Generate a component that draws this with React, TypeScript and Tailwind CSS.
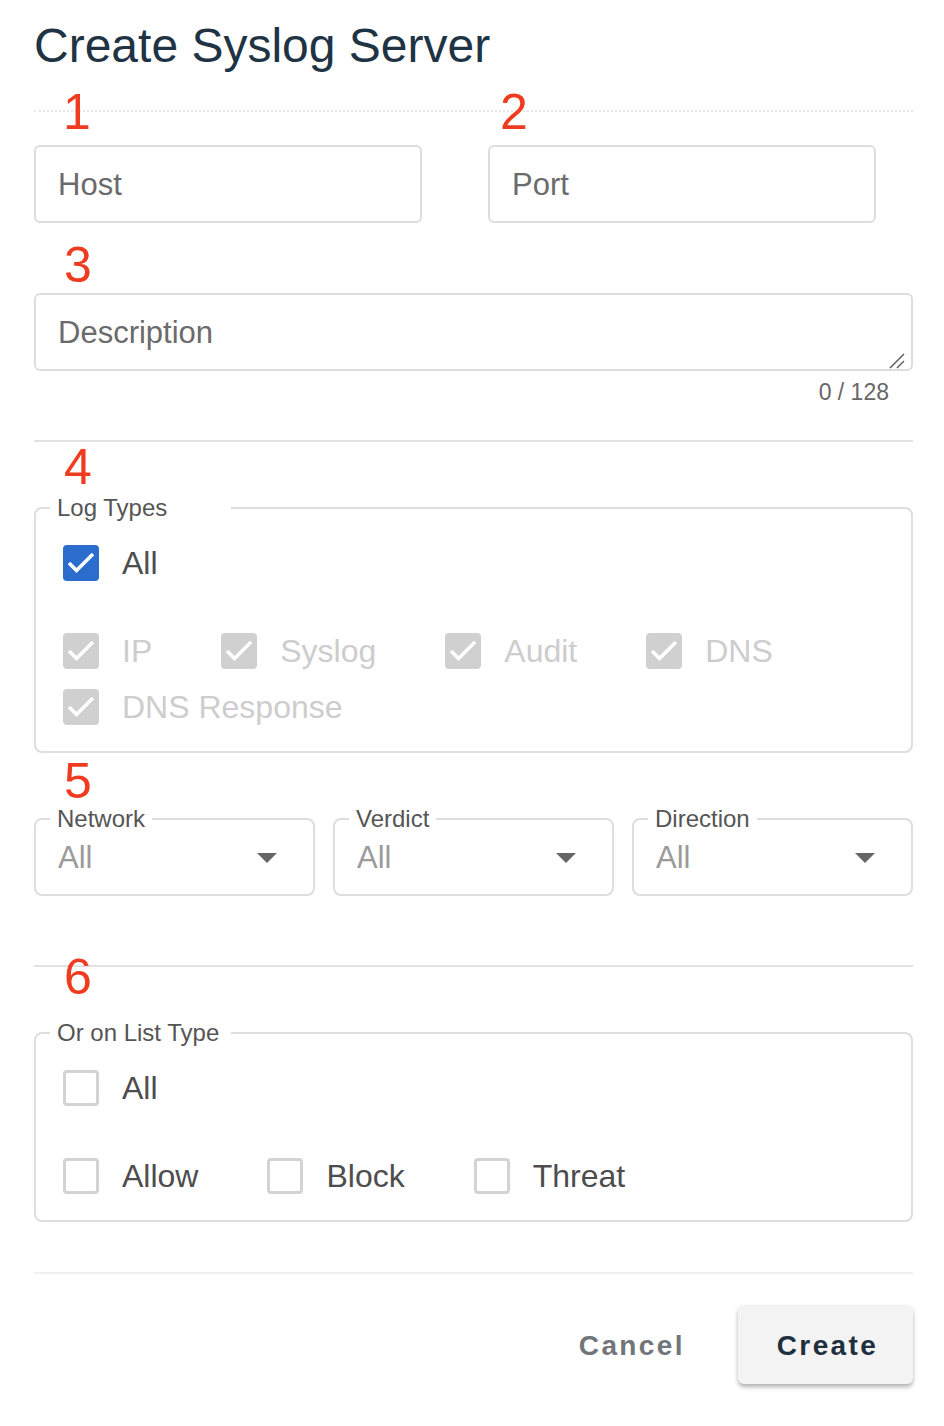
import React from "react";

const logTypes = ["IP", "Syslog", "Audit", "DNS", "DNS Response"];
const listTypes = ["Allow", "Block", "Threat"];
const selects = ["Network", "Verdict", "Direction"];

function Step({ n, className = "" }: { n: string; className?: string }) {
  return (
    <div className={`h-[50px] text-[50px] leading-[50px] text-[#ef3b1f] ${className}`}>{n}</div>
  );
}

function Check({ state }: { state: "on" | "off" | "disabled" }) {
  if (state === "off") {
    return <span className="block h-[36px] w-[36px] shrink-0 rounded-[4px] border-[3px] border-[#d3d3d3]" />;
  }
  return (
    <span
      className={`flex h-[36px] w-[36px] shrink-0 items-center justify-center rounded-[4px] ${
        state === "on" ? "bg-[#2a6dcc]" : "bg-[#d0d0d0]"
      }`}
    >
      <svg width="36" height="36" viewBox="0 0 36 36">
        <polyline points="6,18 13.5,25.5 30,9" fill="none" stroke="#fff" strokeWidth="3.6" />
      </svg>
    </span>
  );
}

function CheckItem({ label, state }: { label: string; state: "on" | "off" | "disabled" }) {
  return (
    <label className="flex h-[56px] items-center gap-[23px]">
      <Check state={state} />
      <span
        className={`text-[32px] leading-[36px] whitespace-nowrap ${
          state === "disabled" ? "text-[#cdcdcd]" : "text-[#4d4d4d]"
        }`}
      >
        {label}
      </span>
    </label>
  );
}

function Group({ title, children }: { title: string; children: React.ReactNode }) {
  return (
    <fieldset className="rounded-[8px] border-2 border-[#dedede] pt-[15px] pb-[16px] pl-[27px]">
      <legend className="ml-[-13px] w-[181px] pl-[7px] text-left text-[24px] leading-[24px] text-[#555]">
        {title}
      </legend>
      {children}
    </fieldset>
  );
}

export default function App() {
  return (
    <div className="min-h-[1426px] w-[944px] bg-white font-['Liberation_Sans',Arial,sans-serif]">
      <div className="ml-[34px] w-[879px] pt-[22px]">
        {/* Title */}
        <h1 className="h-[48px] text-[48px] leading-[48px] text-[#1e3344]">Create Syslog Server</h1>

        <div className="mt-[40px] border-t-2 border-dotted border-[#e6e6e6]" />

        {/* Host / Port */}
        <div className="-mt-[25px] grid grid-cols-[388px_388px] gap-x-[66px] gap-y-[8px]">
          <Step n="1" className="pl-[29px]" />
          <Step n="2" className="pl-[12px]" />
          <input
            placeholder="Host"
            className="h-[78px] w-full rounded-[6px] border-2 border-[#dddddd] px-[22px] pt-[2px] text-[31px] text-[#333] outline-none placeholder:text-[#6b6b6b]"
          />
          <input
            placeholder="Port"
            className="h-[78px] w-full rounded-[6px] border-2 border-[#dddddd] px-[22px] pt-[2px] text-[31px] text-[#333] outline-none placeholder:text-[#6b6b6b]"
          />
        </div>

        {/* Description */}
        <Step n="3" className="mt-[17px] pl-[30px]" />
        <div className="relative mt-[3px]">
          <textarea
            placeholder="Description"
            className="block h-[78px] w-full resize-none rounded-[6px] border-2 border-[#dddddd] px-[22px] pt-[20px] text-[31px] leading-[36px] text-[#333] outline-none placeholder:text-[#6b6b6b]"
          />
          <svg className="absolute right-[8px] bottom-[2px]" width="16" height="16" viewBox="0 0 16 16">
            <path d="M1 15 L15 1 M8 15 L15 8" stroke="#555" strokeWidth="1.4" />
          </svg>
        </div>
        <div className="mt-[10px] pr-[24px] text-right text-[23px] leading-[23px] text-[#666]">0 / 128</div>

        <div className="mt-[36px] border-t-2 border-[#e2e2e2]" />

        {/* Log types */}
        <Step n="4" className="pl-[30px]" />
        <div className="mt-[4px]">
          <Group title="Log Types">
            <CheckItem label="All" state="on" />
            <div className="mt-[32px] flex flex-wrap gap-x-[69px]">
              {logTypes.map((t) => (
                <CheckItem key={t} label={t} state="disabled" />
              ))}
            </div>
          </Group>
        </div>

        {/* Selects */}
        <Step n="5" className="mt-[3px] pl-[30px]" />
        <div className="mt-[1px] grid grid-cols-3 gap-x-[18px]">
          {selects.map((s) => (
            <fieldset key={s} className="h-[89px] rounded-[8px] border-2 border-[#dedede]">
              <legend className="ml-[14px] px-[7px] text-[24px] leading-[24px] text-[#555]">{s}</legend>
              <div className="mt-[12px] flex h-[30px] items-center justify-between pl-[22px] pr-[36px]">
                <span className="text-[31px] leading-[30px] text-[#9b9b9b]">All</span>
                <svg width="20" height="10" viewBox="0 0 20 10">
                  <polygon points="0,0 20,0 10,10" fill="#666" />
                </svg>
              </div>
            </fieldset>
          ))}
        </div>

        <div className="mt-[69px] border-t-2 border-[#e2e2e2]" />

        {/* List types */}
        <Step n="6" className="-mt-[15px] pl-[30px]" />
        <div className="mt-[19px]">
          <Group title="Or on List Type">
            <CheckItem label="All" state="off" />
            <div className="mt-[32px] flex flex-wrap gap-x-[69px]">
              {listTypes.map((t) => (
                <CheckItem key={t} label={t} state="off" />
              ))}
            </div>
          </Group>
        </div>

        <div className="mt-[50px] border-t-2 border-[#f0f0f0]" />

        {/* Actions */}
        <div className="mt-[31px] flex items-center justify-end gap-[29px]">
          <button className="h-[79px] px-[24px] pt-[2px] text-[28px] font-bold tracking-[2.4px] text-[#71767b]">
            Cancel
          </button>
          <button className="h-[79px] w-[175px] rounded-[6px] bg-[#f3f3f3] pt-[2px] pl-[4px] text-[28px] font-bold tracking-[2.4px] text-[#1e2f3e] shadow-[0_3px_4px_rgba(0,0,0,0.3)]">
            Create
          </button>
        </div>
      </div>
    </div>
  );
}
